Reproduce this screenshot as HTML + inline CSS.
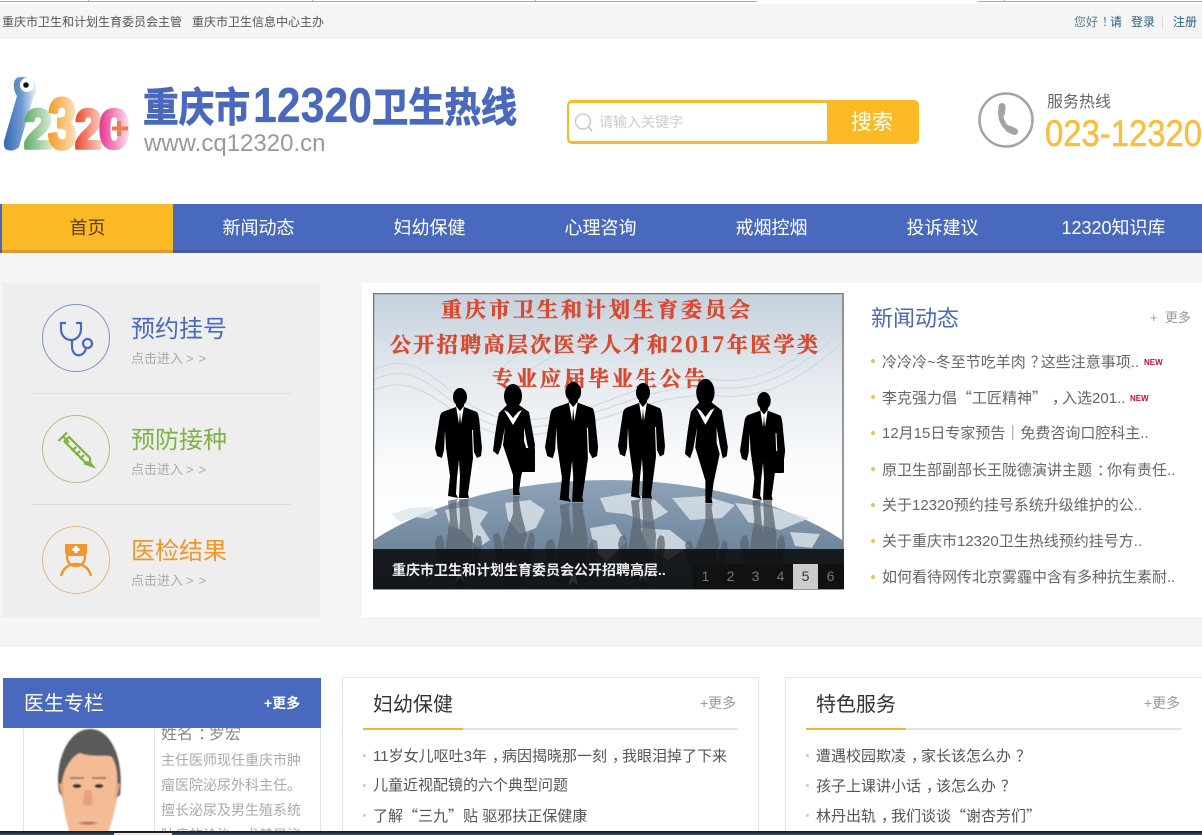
<!DOCTYPE html>
<html lang="zh">
<head>
<meta charset="utf-8">
<title>重庆市12320卫生热线</title>
<style>
html,body{margin:0;padding:0;width:1202px;height:835px;overflow:hidden}
body{background:#f5f5f5;font-family:"Liberation Sans","Noto Sans CJK SC",sans-serif}
#r{position:relative;width:1202px;height:835px;overflow:hidden}
.a{position:absolute}
.t{position:absolute;white-space:nowrap;line-height:1;margin:0}
.c{font-family:"Noto Sans CJK TC",sans-serif;position:relative;left:5px}
.qo,.qc{font-family:"Noto Sans CJK SC",sans-serif;display:inline-block;width:1em}
.qo{text-align:right}
.qc{text-align:left}
.nav{position:absolute;top:205px;height:46px;line-height:46px;font-size:18px;color:#fff;text-align:center;width:171px}
.sub{font-size:13px;color:#aaa}
.sub i{font-style:normal;letter-spacing:5px;margin-left:3px}
.ttl{font-size:24px}
.news{font-size:15px;color:#666;left:882px}
.dot{position:absolute;width:4px;height:4px;border-radius:50%;background:#f4c04e;left:871px}
.new{font-size:8px;font-weight:bold;color:#c8102e}
.pg{position:absolute;top:564px;width:25px;height:25px;line-height:25px;text-align:center;font-size:14px;color:#777}
.li{font-size:15px;color:#555}
.b2{position:absolute;width:3px;height:3px;border-radius:50%;background:#ccc}
.doc{font-size:14px;color:#aaa;left:161px}
</style>
</head>
<body>
<div id="r">
<!-- browser strip -->
<div class="a" style="left:0;top:0;width:1202px;height:4px;background:#fff"></div>
<div class="a" style="left:0;top:1px;width:757px;height:1px;background:#aaa"></div>
<div class="a" style="left:978px;top:1px;width:224px;height:1px;background:#aaa"></div>
<div class="a" style="left:88px;top:0;width:1px;height:1px;background:#aaa"></div>
<div class="a" style="left:312px;top:0;width:1px;height:1px;background:#aaa"></div>
<div class="a" style="left:535px;top:0;width:1px;height:1px;background:#aaa"></div>
<div class="a" style="left:1004px;top:0;width:1px;height:1px;background:#aaa"></div>

<div class="t" style="left:2px;top:16px;font-size:12px;color:#555">重庆市卫生和计划生育委员会主管</div>
<div class="t" style="left:192px;top:16px;font-size:12px;color:#555">重庆市卫生信息中心主办</div>
<div class="t" style="left:1074px;top:16px;font-size:12px;color:#5a7d96">您好<span class="c" style="left:4px">！</span><span style="color:#2a5f8a">请</span></div>
<div class="t" style="left:1131px;top:16px;font-size:12px;color:#2a5f8a">登录</div>
<div class="a" style="left:1162px;top:16px;width:1px;height:14px;background:#ddd"></div>
<div class="t" style="left:1173px;top:16px;font-size:12px;color:#2a5f8a">注册</div>

<!-- header -->
<div class="a" style="left:0;top:39px;width:1202px;height:165px;background:#fff"></div>
<svg class="a" style="left:0;top:70px" width="140" height="90" viewBox="0 70 140 90">
<defs>
<linearGradient id="gi" x1="0" x2="1" y1="0" y2="0"><stop offset="0" stop-color="#3568b0"/><stop offset=".55" stop-color="#6f9ad2"/><stop offset="1" stop-color="#f0f4fa"/></linearGradient>
<linearGradient id="g2" x1="0" x2="1" y1="0" y2="0"><stop offset="0" stop-color="#5fab63"/><stop offset="1" stop-color="#dcecd8"/></linearGradient>
<linearGradient id="g3" x1="0" x2="1" y1="0" y2="0"><stop offset="0" stop-color="#f59a24"/><stop offset="1" stop-color="#fbe2bd"/></linearGradient>
<linearGradient id="g4" x1="0" x2="1" y1="0" y2="0"><stop offset="0" stop-color="#e8472e"/><stop offset="1" stop-color="#fbd2c2"/></linearGradient>
<linearGradient id="g5" x1="0" x2="1" y1="0" y2="0"><stop offset="0" stop-color="#e6318c"/><stop offset="1" stop-color="#fbe4ef"/></linearGradient>
</defs>
<path d="M14 83 Q15 76 24 77 L31 79 Q38 83 36 92 L33 98 L19 147 Q14 152 7 150 Q3 148 4 141 L17 96 Q13 90 14 83Z" fill="url(#gi)"/>
<circle cx="27" cy="85" r="7" fill="#fff"/><circle cx="26" cy="85" r="2.800" fill="#111"/>
<g font-family="Liberation Sans" font-weight="bold" font-size="55" stroke-linejoin="round" stroke-width="3.500">
<text transform="translate(24 148) scale(.92 1)" fill="url(#g2)" stroke="url(#g2)">2</text>
<text transform="translate(48 148) scale(.72 1)" font-size="71" fill="url(#g3)" stroke="url(#g3)">3</text>
<text transform="translate(75 148) scale(.88 1)" fill="url(#g4)" stroke="url(#g4)">2</text>
<text transform="translate(99 148) scale(1 1)" fill="url(#g5)" stroke="url(#g5)">0</text>
</g>
<path d="M112 128.500H128M119 121V136" stroke="#ef7d52" stroke-width="4"/>
</svg>
<svg class="a" style="left:140px;top:70px" width="385" height="65" viewBox="140 70 385 65">
<g fill="#4a69bd" font-weight="bold" stroke="#4a69bd" stroke-width=".8">
<text font-family="Noto Sans CJK SC,sans-serif" font-size="36" x="143" y="108.500" textLength="107" lengthAdjust="spacingAndGlyphs" transform="scale(1 1.12)">重庆市</text>
<text font-family="Liberation Sans" font-size="49" stroke-width=".2" x="253" y="122" textLength="119" lengthAdjust="spacingAndGlyphs">12320</text>
<text font-family="Noto Sans CJK SC,sans-serif" font-size="36" x="372" y="108.500" textLength="145" lengthAdjust="spacingAndGlyphs" transform="scale(1 1.12)">卫生热线</text>
</g>
</svg>
<div class="t" style="left:144px;top:132px;font-size:24px;color:#999">www.cq12320.cn</div>

<!-- search -->
<div class="a" style="left:567px;top:100px;width:350px;height:38px;border:3px solid #fbb925;border-left-width:2px;border-right:0;border-radius:5px;background:#fff"></div>
<div class="a" style="left:827px;top:100px;width:92px;height:44px;background:#fbb925;border-radius:0 5px 5px 0"></div>
<div class="t" style="left:851px;top:112px;font-size:21px;color:#fff">搜索</div>
<svg class="a" style="left:573px;top:111px" width="24" height="24"><circle cx="10" cy="10.500" r="7.500" fill="none" stroke="#ccc" stroke-width="1.500"/><path d="M15.500 16L19 20" stroke="#ccc" stroke-width="2"/></svg>
<div class="t" style="left:599px;top:115px;font-size:14px;color:#ccc">请输入关键字</div>

<!-- hotline -->
<svg class="a" style="left:975px;top:90px" width="62" height="60" fill="none" stroke="#a3a3a3" stroke-linecap="round">
<circle cx="31" cy="30" r="26.500" stroke-width="2.500"/>
<path d="M26.500 18C24 28 28 37 37 41" stroke-width="5"/>
<path d="M27 16.500L26.500 23M34 39L39.500 41.500" stroke-width="7"/>
</svg>
<div class="t" style="left:1047px;top:95px;font-size:16px;color:#666">服务热线</div>
<svg class="a" style="left:1040px;top:110px" width="162" height="42"><text x="5" y="36" font-family="Liberation Sans" font-size="37" fill="#fbbd3c" textLength="157" lengthAdjust="spacingAndGlyphs" stroke="#fbbd3c" stroke-width=".5">023-12320</text></svg>

<!-- nav -->
<div class="a" style="left:0;top:204px;width:1202px;height:46px;background:#4969bf"></div>
<div class="a" style="left:0;top:250px;width:1202px;height:3px;background:#485a9c"></div>
<div class="a" style="left:2px;top:204px;width:171px;height:46px;background:#fbb925"></div>
<div class="a" style="left:2px;top:250px;width:171px;height:3px;background:#d99a3a"></div>
<div class="nav" style="left:2px;color:#5c3d10">首页</div>
<div class="nav" style="left:173px">新闻动态</div>
<div class="nav" style="left:344px">妇幼保健</div>
<div class="nav" style="left:515px">心理咨询</div>
<div class="nav" style="left:686px">戒烟控烟</div>
<div class="nav" style="left:857px">投诉建议</div>
<div class="nav" style="left:1028px">12320知识库</div>

<!-- left quick links -->
<div class="a" style="left:2px;top:283px;width:318px;height:334px;background:#eee"></div>
<div class="a" style="left:31px;top:393px;width:260px;height:1px;background:#ddd"></div>
<div class="a" style="left:31px;top:504px;width:260px;height:1px;background:#ddd"></div>
<svg class="a" style="left:0;top:280px" width="130" height="330" viewBox="0 280 130 330" fill="none">
<circle cx="76" cy="338" r="33.500" stroke="#7d92cf"/>
<path d="M66 323H61V329C61 336 66 340 71 340C76 340 81 336 81 329V323H76M72 340V346C72 358 84 358 86 348" stroke="#4a69bd" stroke-width="2.200"/>
<circle cx="87.500" cy="343.500" r="4.500" stroke="#4a69bd" stroke-width="2.200"/>
<circle cx="76" cy="449" r="33.500" stroke="#a6c583"/>
<g stroke="#7cb342" stroke-width="2.200">
<path d="M58.500 441L67 432.500M63 436.500L69 442.500"/>
<path d="M69 437L90 458V462.500H85.500L64.500 441.500Z"/>
<path d="M76 447L72 451M80 451L76 455M84 455L80 459"/>
<path d="M90 462.500L93 466.500L86 464Z" fill="#7cb342"/>
</g>
<circle cx="76" cy="560" r="33.500" stroke="#e5b985"/>
<path d="M65 544H87V553L85 556H67L65 553Z" fill="#f0962a"/>
<path d="M74.500 546H77.500V548H79.500V551H77.500V553H74.500V551H72.500V548H74.500Z" fill="#fff"/>
<path d="M67 553V557C67 569 85 569 85 557V553" stroke="#f0962a" stroke-width="2.400"/>
<path d="M61 576C63 568 69 564 76 564C83 564 89 568 91 576" stroke="#f0962a" stroke-width="2.400"/>
</svg>
<div class="t ttl" style="left:131px;top:318px;color:#4a69bd">预约挂号</div>
<div class="t sub" style="left:131px;top:352px">点击进入<i>&gt;&gt;</i></div>
<div class="t ttl" style="left:131px;top:429px;color:#7cb342">预防接种</div>
<div class="t sub" style="left:131px;top:463px">点击进入<i>&gt;&gt;</i></div>
<div class="t ttl" style="left:131px;top:540px;color:#f0962a">医检结果</div>
<div class="t sub" style="left:131px;top:574px">点击进入<i>&gt;&gt;</i></div>

<!-- center/right white panel -->
<div class="a" style="left:362px;top:283px;width:840px;height:334px;background:#fff"></div>

<!-- slide -->
<svg class="a" style="left:373px;top:293px" width="471" height="297" viewBox="373 293 471 297">
<defs>
<linearGradient id="sky" x1="0" x2="0" y1="0" y2="1"><stop offset="0" stop-color="#c4d0dc"/><stop offset=".3" stop-color="#e6ebf0"/><stop offset=".6" stop-color="#fbfcfd"/><stop offset="1" stop-color="#fff"/></linearGradient>
<linearGradient id="globe" x1="0" x2="0" y1="0" y2="1"><stop offset="0" stop-color="#8ea3b8"/><stop offset=".25" stop-color="#6b8299"/><stop offset=".55" stop-color="#3e566e"/><stop offset="1" stop-color="#2a3c50"/></linearGradient>
<clipPath id="sc"><rect x="374" y="294" width="469" height="295"/></clipPath>
<g id="man">
<ellipse cx="25" cy="9" rx="7" ry="9"/>
<path d="M21 15H29V19L42 24Q44 26 45 40L47 60L46 68L42 70L39 64L38 42L37 42L38 70L35 92L33 106L34 110L24 110L25 88L24 72L22 90L21 106L23 110L13 108L15 88L11 60L10 42L9 62L7 70L2 68L0 60Q3 40 5 28Q6 24 10 23L21 19Z"/>
<path d="M21 18L24 36L25 24L26 36L29 18L25 23Z" fill="#fff"/>
</g>
<g id="wom">
<ellipse cx="20" cy="11" rx="9" ry="12"/>
<path d="M14 20L26 20L36 27L42 60L41 68L37 70L34 58L31 42L31 56L34 66L28 92L26 106L27 110L20 110L20 90L14 72L10 60L12 42L8 62L5 70L0 66Q3 40 6 28Z"/>
<path d="M11 25L20 40L29 25L25 27L20 33L15 27Z" fill="#fff"/>
</g>
<filter id="soft"><feGaussianBlur stdDeviation=".7"/></filter>
</defs>
<g clip-path="url(#sc)">
<rect x="373" y="293" width="471" height="297" fill="url(#sky)"/>
<g fill="none" stroke="#cfd6dd" stroke-width="1">
<path d="M374 370C430 340 450 420 520 420C600 420 640 370 720 380C770 385 810 350 843 320"/>
<path d="M374 380C430 350 450 430 520 428C600 425 640 380 720 388C770 392 810 360 843 330"/>
<path d="M374 390C430 365 460 440 520 436C600 430 650 390 720 396C770 400 810 372 843 342"/>
<path d="M500 370C540 330 590 330 640 310M520 380C560 340 610 340 660 320"/>
</g>
<ellipse cx="608" cy="640" rx="300" ry="160" fill="url(#globe)"/>
<g fill="#dfe6ec" opacity=".8">
<path d="M392 514L410 508L432 507L438 514L428 519L415 517L400 522Z"/>
<path d="M445 510L470 506L488 512L480 524L490 540L478 548L462 530L450 526Z"/>
<path d="M505 503L530 500L545 510L536 528L520 534L508 520Z"/>
<path d="M600 498L630 493L655 500L668 512L650 522L625 514L606 512Z"/>
<path d="M672 498L705 496L735 505L722 518L690 520Z"/>
<path d="M735 503L770 507L810 518L780 530L748 522Z"/>
<path d="M590 528L615 524L626 542L606 562L594 548Z"/>
<path d="M640 528L670 530L690 546L668 560L648 548Z"/>
<path d="M790 532L820 534L812 548L795 546Z"/>
</g>
<g fill="#5c6670" opacity=".75">
<use href="#man" transform="matrix(1 0 0 -.9 435 598)"/>
<use href="#wom" transform="matrix(1 0 0 -.9 493 595)"/>
<use href="#man" transform="matrix(1.130 0 0 -.9 545 602)"/>
<use href="#man" transform="matrix(1 0 0 -.9 618 598)"/>
<use href="#wom" transform="matrix(1.020 0 0 -.9 685 603)"/>
<use href="#man" transform="matrix(.96 0 0 -.9 740 598)"/>
</g>
<g font-family="Noto Serif CJK SC,serif" font-weight="bold" fill="#d9492f" stroke="#d9492f" stroke-width=".5" font-size="21">
<text x="441" y="317" textLength="309">重庆市卫生和计划生育委员会</text>
<text x="390" y="352" textLength="428">公开招聘高层次医学人才和2017年医学类</text>
<text x="492" y="386" textLength="213">专业应届毕业生公告</text>
</g>
<g fill="#000">
<use href="#man" transform="translate(435 388)"/>
<use href="#wom" transform="translate(493 385)"/>
<rect x="518" y="448" width="17" height="24" rx="1"/>
<use href="#man" transform="translate(545 382) scale(1.130 1.090)"/>
<use href="#man" transform="translate(618 383) scale(1 1.050)"/>
<use href="#wom" transform="translate(685 380) scale(1.020 1.120)"/>
<use href="#man" transform="translate(740 392) scale(.96 .98)"/>
<rect x="773" y="451" width="11" height="22" rx="1"/>
</g>
</g>
<rect x="373.500" y="293.500" width="469.500" height="295.500" fill="none" stroke="#777" stroke-width="1.500"/>
<rect x="373" y="549" width="471" height="40" fill="#000" opacity=".8"/>
<rect x="693" y="564" width="151" height="25" fill="#111" opacity=".9"/>
</svg>
<div class="t" style="left:392px;top:563px;font-size:14px;font-weight:bold;color:#eee">重庆市卫生和计划生育委员会公开招聘高层..</div>
<div class="pg" style="left:693px">1</div>
<div class="pg" style="left:718px">2</div>
<div class="pg" style="left:743px">3</div>
<div class="pg" style="left:768px">4</div>
<div class="pg" style="left:793px;background:#ccc;color:#333">5</div>
<div class="pg" style="left:818px">6</div>

<!-- news -->
<div class="t" style="left:871px;top:308px;font-size:22px;color:#4a69bd">新闻动态</div>
<div class="t" style="left:1150px;top:311px;font-size:13px;color:#999">+&nbsp;&nbsp;更多</div>
<div class="dot" style="top:359px"></div><div class="t news" style="top:354px">冷冷冷~冬至节吃羊肉<span class="c">？</span>这些注意事项..</div><div class="t new" style="left:1144px;top:359px">NEW</div>
<div class="dot" style="top:395px"></div><div class="t news" style="top:390px">李克强力倡<span class="qo">“</span>工匠精神<span class="qc">”</span><span class="c">，</span>入选201..</div><div class="t new" style="left:1130px;top:395px">NEW</div>
<div class="dot" style="top:431px"></div><div class="t news" style="top:426px">12月15日专家预告｜免费咨询口腔科主..</div>
<div class="dot" style="top:467px"></div><div class="t news" style="top:462px">原卫生部副部长王陇德演讲主题<span class="c">：</span>你有责任..</div>
<div class="dot" style="top:503px"></div><div class="t news" style="top:498px">关于12320预约挂号系统升级维护的公..</div>
<div class="dot" style="top:539px"></div><div class="t news" style="top:534px">关于重庆市12320卫生热线预约挂号方..</div>
<div class="dot" style="top:575px"></div><div class="t news" style="top:570px">如何看待网传北京雾霾中含有多种抗生素耐..</div>

<!-- lower section -->
<div class="a" style="left:0;top:647px;width:1202px;height:188px;background:#fff"></div>

<!-- doctor -->
<div class="a" style="left:23px;top:728px;width:298px;height:104px;border-left:1px solid #e5e5e5;border-right:1px solid #e5e5e5;box-sizing:border-box"></div>
<div class="a" style="left:154px;top:728px;width:1px;height:104px;background:#e5e5e5"></div>
<svg class="a" style="left:24px;top:728px" width="130" height="104" viewBox="24 728 130 104">
<g filter="url(#soft)">
<path d="M59 792C54 762 68 729 90 729C112 729 124 760 120 795L114 800H64Z" fill="#5b5a58"/>
<path d="M62 782C64 768 72 756 80 753C92 758 106 754 112 757C117 766 118 776 117 790C117 808 112 820 108 834H70C66 820 62 806 62 782Z" fill="#f3bc95"/>
<path d="M59 784L64 806L63 783ZM120 784L115 806L116 783Z" fill="#e4a67c"/>
<ellipse cx="77" cy="786" rx="4.500" ry="2" fill="#3c2a22"/><ellipse cx="99" cy="786" rx="4.500" ry="2" fill="#3c2a22"/>
<path d="M70 778H84M92 778H106" stroke="#7a6a60" stroke-width="1.500"/>
<path d="M85 790L83 804Q88 807 93 804L91 790" fill="#e6a27a"/>
<path d="M78 823Q88 820 98 823Q88 827 78 823Z" fill="#c4746a"/>
</g>
</svg>
<div class="t" style="left:161px;top:724px;font-size:16px;color:#888">姓名<span class="c">：</span>罗宏</div>
<div class="t doc" style="top:753px">主任医师现任重庆市肿</div>
<div class="t doc" style="top:778px">瘤医院泌尿外科主任。</div>
<div class="t doc" style="top:803px">擅长泌尿及男生殖系统</div>
<div class="t doc" style="top:828px">肿瘤的诊治，尤其是泌</div>
<div class="a" style="left:3px;top:678px;width:318px;height:50px;background:#4969bf"></div>
<div class="t" style="left:24px;top:694px;font-size:20px;color:#fff">医生专栏</div>
<div class="t" style="left:264px;top:696px;font-size:14px;font-weight:bold;color:#fff">+更多</div>

<!-- maternal -->
<div class="a" style="left:342px;top:677px;width:417px;height:158px;border:1px solid #e5e5e5;box-sizing:border-box;background:#fff"></div>
<div class="t" style="left:373px;top:695px;font-size:20px;color:#333">妇幼保健</div>
<div class="t" style="left:700px;top:696px;font-size:14px;color:#999">+更多</div>
<div class="a" style="left:363px;top:728px;width:375px;height:2px;background:#e5e5e5"></div>
<div class="a" style="left:363px;top:728px;width:100px;height:2px;background:#f0b92d"></div>
<div class="b2" style="left:363px;top:754px"></div><div class="t li" style="left:373px;top:748px">11岁女儿呕吐3年<span class="c">，</span>病因揭晓那一刻<span class="c">，</span>我眼泪掉了下来</div>
<div class="b2" style="left:363px;top:784px"></div><div class="t li" style="left:373px;top:778px">儿童近视配镜的六个典型问题</div>
<div class="b2" style="left:363px;top:814px"></div><div class="t li" style="left:373px;top:808px">了解<span class="qo">“</span>三九<span class="qc">”</span>贴 驱邪扶正保健康</div>

<!-- services -->
<div class="a" style="left:785px;top:677px;width:418px;height:158px;border:1px solid #e5e5e5;box-sizing:border-box;background:#fff"></div>
<div class="t" style="left:816px;top:695px;font-size:20px;color:#333">特色服务</div>
<div class="t" style="left:1144px;top:696px;font-size:14px;color:#999">+更多</div>
<div class="a" style="left:806px;top:728px;width:375px;height:2px;background:#e5e5e5"></div>
<div class="a" style="left:806px;top:728px;width:100px;height:2px;background:#f0b92d"></div>
<div class="b2" style="left:806px;top:754px"></div><div class="t li" style="left:816px;top:748px">遭遇校园欺凌<span class="c">，</span>家长该怎么办<span class="c">？</span></div>
<div class="b2" style="left:806px;top:784px"></div><div class="t li" style="left:816px;top:778px">孩子上课讲小话<span class="c">，</span>该怎么办<span class="c">？</span></div>
<div class="b2" style="left:806px;top:814px"></div><div class="t li" style="left:816px;top:808px">林丹出轨<span class="c">，</span>我们谈谈<span class="qo">“</span>谢杏芳们<span class="qc">”</span></div>

<!-- taskbar -->
<div class="a" style="left:0;top:831px;width:1202px;height:4px;background:linear-gradient(#10161e,#3d5268)"></div>
<div class="a" style="left:114px;top:832px;width:58px;height:3px;background:#e8e8e8;border-top:1px solid #222;box-sizing:border-box"></div>
</div>
</body>
</html>
